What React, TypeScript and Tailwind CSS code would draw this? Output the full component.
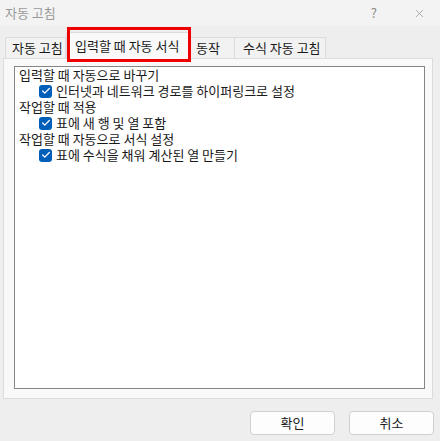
import { Check, X } from "lucide-react";

const font = { fontFamily: '"Noto Sans CJK KR", "Noto Sans", sans-serif' };

function CheckRow({ label }: { label: string }) {
  return (
    <div className="flex h-[16px] items-center pl-[20px]">
      <span className="mr-[4px] flex h-[13px] w-[13px] items-center justify-center rounded-[3px] bg-[#005fb8]">
        <Check size={10} strokeWidth={3} className="text-white" />
      </span>
      <span>{label}</span>
    </div>
  );
}

export default function App() {
  return (
    <div
      className="flex h-[441px] w-[440px] flex-col bg-[#eeeeee] text-[13px] text-[#1a1a1a]"
      style={font}
    >
      {/* Title bar */}
      <div className="flex h-[26px] items-center bg-[#f3f3f3] pl-[5px] text-[#999999]">
        <span className="flex-1">자동 고침</span>
        <span className="mr-[36px] text-[13px] text-[#888888]">?</span>
        <X size={13} strokeWidth={1.2} className="mr-[14px] text-[#888888]" />
      </div>

      {/* Tabs */}
      <div className="flex h-[32px] items-end pl-[5px]">
        <div className="flex h-[21px] w-[61px] items-center border border-b-0 border-[#dcdcdc] bg-[#f2f2f2] pl-[6px]">
          자동 고침
        </div>
        <div className="relative z-10 -mb-px flex h-[27px] w-[124px] items-center border border-b-0 border-[#dcdcdc] bg-[#f9f9f9] pl-[8px]">
          입력할 때 자동 서식
          <div className="absolute left-[0px] top-[-6px] h-[35px] w-[124px] border-[3px] border-[#ee0000]" />
        </div>
        <div className="flex h-[21px] w-[45px] items-center border border-b-0 border-l-0 border-[#dcdcdc] bg-[#f2f2f2] pl-[6px]">
          동작
        </div>
        <div className="flex h-[21px] w-[91px] items-center border border-b-0 border-l-0 border-[#dcdcdc] bg-[#f2f2f2] pl-[8px]">
          수식 자동 고침
        </div>
      </div>

      {/* Panel */}
      <div className="mx-[3px] flex h-[341px] w-[430px] flex-col border border-[#dcdcdc] bg-[#f9f9f9] pb-[9px] pl-[10px] pr-[7px] pt-[7px]">
        <div className="flex-1 border border-[#858585] bg-white pl-[4px] leading-[16px]">
          <div className="h-[16px]">입력할 때 자동으로 바꾸기</div>
          <CheckRow label="인터넷과 네트워크 경로를 하이퍼링크로 설정" />
          <div className="h-[16px]">작업할 때 적용</div>
          <CheckRow label="표에 새 행 및 열 포함" />
          <div className="h-[16px]">작업할 때 자동으로 서식 설정</div>
          <CheckRow label="표에 수식을 채워 계산된 열 만들기" />
        </div>
      </div>

      {/* Buttons */}
      <div className="mt-[12px] flex justify-end gap-[14px] pr-[6px]">
        <button className="flex h-[24px] w-[85px] items-center justify-center rounded-[4px] border border-[#d0d0d0] bg-[#fdfdfd]">
          확인
        </button>
        <button className="flex h-[24px] w-[85px] items-center justify-center rounded-[4px] border border-[#d0d0d0] bg-[#fdfdfd]">
          취소
        </button>
      </div>
    </div>
  );
}
